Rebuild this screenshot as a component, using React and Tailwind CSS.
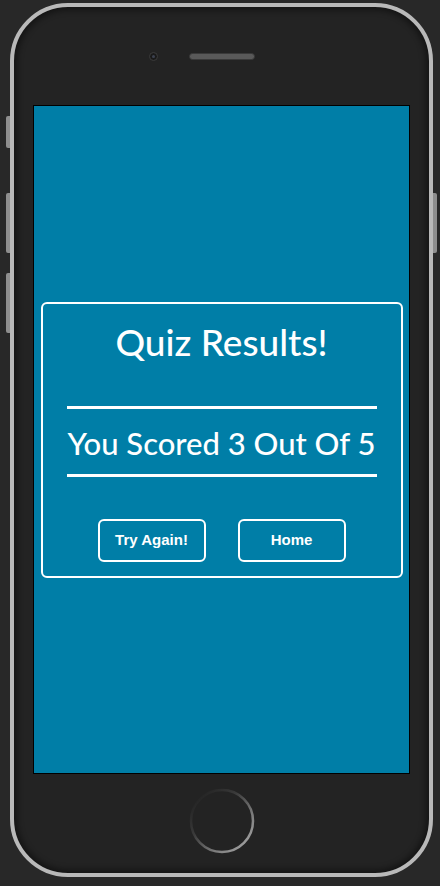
import React from 'react';

const HomeButton = () => (
  <svg width="70" height="70" viewBox="0 0 70 70">
    <defs>
      <linearGradient id="ring" x1="0.1" y1="0.1" x2="0.9" y2="0.9">
        <stop offset="0" stopColor="#232323" />
        <stop offset="0.35" stopColor="#3a3a3a" />
        <stop offset="0.7" stopColor="#777777" />
        <stop offset="1" stopColor="#a0a0a0" />
      </linearGradient>
    </defs>
    <circle cx="35" cy="35" r="31" fill="none" stroke="url(#ring)" strokeWidth="2.5" />
  </svg>
);

export default function App() {
  return (
    <div className="min-h-[886px] w-[440px] bg-[#282828] pt-[3px] pl-[10px]">
      <div className="relative w-[423px] h-[874px] rounded-[58px] border-[4px] border-[#b9b9b9] bg-[#232323] shadow-[inset_0_0_6px_3px_rgba(0,0,0,0.45)]">
        {/* side buttons */}
        <div className="absolute left-[-8px] top-[109px] h-[32px] w-[4px] rounded-l-[2px] bg-[#8e8e8e]" />
        <div className="absolute left-[-8px] top-[186px] h-[60px] w-[4px] rounded-l-[2px] bg-[#8e8e8e]" />
        <div className="absolute left-[-8px] top-[266px] h-[60px] w-[4px] rounded-l-[2px] bg-[#8e8e8e]" />
        <div className="absolute right-[-8px] top-[186px] h-[60px] w-[4px] rounded-r-[2px] bg-[#8e8e8e]" />

        <div className="flex flex-col items-center h-full">
          {/* top bezel */}
          <div className="h-[98px] w-full relative">
            <div className="absolute left-[135px] top-[45px] h-[9px] w-[9px] rounded-full bg-[#1a1a1a] border border-[#3c3c3c] flex items-center justify-center">
              <div className="h-[3px] w-[3px] rounded-full bg-[#3d4250]" />
            </div>
            <div className="absolute left-[175px] top-[46px] h-[7px] w-[66px] rounded-full bg-[#4a4a4a] border border-[#3a3a3a] bg-[radial-gradient(#6a6a6a_0.6px,transparent_0.8px)] bg-[length:2px_2px]" />
          </div>

          {/* screen */}
          <div className="w-[377px] h-[669px] border border-black bg-[#007ea7] flex items-center justify-center">
            <div className="w-[362px] h-[276px] border-2 border-white rounded-[6px] flex flex-col items-center font-['Lato','Noto_Sans',sans-serif] text-white">
              <h1 className="mt-[16px] text-[37px] leading-[44px] font-medium">Quiz Results!</h1>
              <div className="mt-[42px] h-[3px] w-[310px] bg-white" />
              <p className="mt-[16px] text-[31px] leading-[36px] font-medium">You Scored 3 Out Of 5</p>
              <div className="mt-[13px] h-[3px] w-[310px] bg-white" />
              <div className="mt-[42px] flex gap-[32px]">
                <button className="w-[108px] h-[43px] border-2 border-white rounded-[6px] font-['Liberation_Sans',Arial,sans-serif] font-bold text-[15px] text-white">Try Again!</button>
                <button className="w-[108px] h-[43px] border-2 border-white rounded-[6px] font-['Liberation_Sans',Arial,sans-serif] font-bold text-[15px] text-white">Home</button>
              </div>
            </div>
          </div>

          {/* bottom bezel */}
          <div className="flex-1 w-full flex justify-center pt-[12px]">
            <HomeButton />
          </div>
        </div>
      </div>
    </div>
  );
}
